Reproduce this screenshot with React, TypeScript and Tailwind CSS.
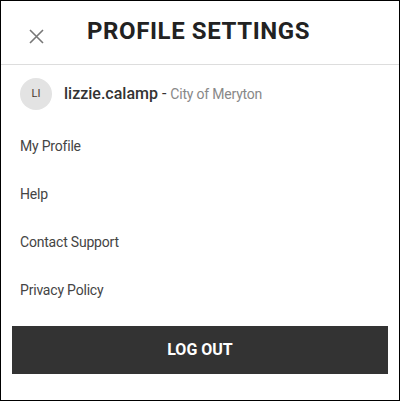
import React from 'react';

const menuItems = ['My Profile', 'Help', 'Contact Support', 'Privacy Policy'];

const App: React.FC = () => {
  return (
    <div className="w-[400px] h-[401px] bg-white border border-black flex flex-col font-['Roboto',sans-serif]">
      <div className="h-[64px] border-b border-[#dddddd] flex items-center shrink-0">
        <button className="w-[86px] h-full flex items-center justify-center pt-[8px] pr-[16px] text-[#777777]">
          <svg width="15" height="15" viewBox="0 0 15 15" fill="none" stroke="currentColor" strokeWidth="1.6">
            <path d="M1 1 L14 14 M14 1 L1 14" />
          </svg>
        </button>
        <h1 className="text-[24px] font-bold tracking-[0.6px] text-[#222222] leading-none pb-[4px]">PROFILE SETTINGS</h1>
      </div>

      <div className="flex items-center gap-[12px] px-[19px] pt-[13px] pb-[12px]">
        <div className="w-[32px] h-[32px] rounded-full bg-[#e3e3e3] flex items-center justify-center text-[11px] text-[#4a3a30]">
          LI
        </div>
        <div className="text-[16px] flex items-baseline">
          <span className="font-medium text-[#333333]">lizzie.calamp</span>
          <span className="text-[#333333] whitespace-pre"> - </span>
          <span className="text-[#888888] text-[14px] tracking-[-0.2px]">City of Meryton</span>
        </div>
      </div>

      <div className="flex flex-col">
        {menuItems.map((item) => (
          <div key={item} className="h-[48px] flex items-center px-[19px] text-[14px] tracking-[-0.2px] text-[#444444]">
            {item}
          </div>
        ))}
      </div>

      <div className="px-[11px] pt-[12px]">
        <button className="w-full h-[48px] bg-[#333333] text-white font-bold text-[16px]">LOG OUT</button>
      </div>
    </div>
  );
};

export default App;
